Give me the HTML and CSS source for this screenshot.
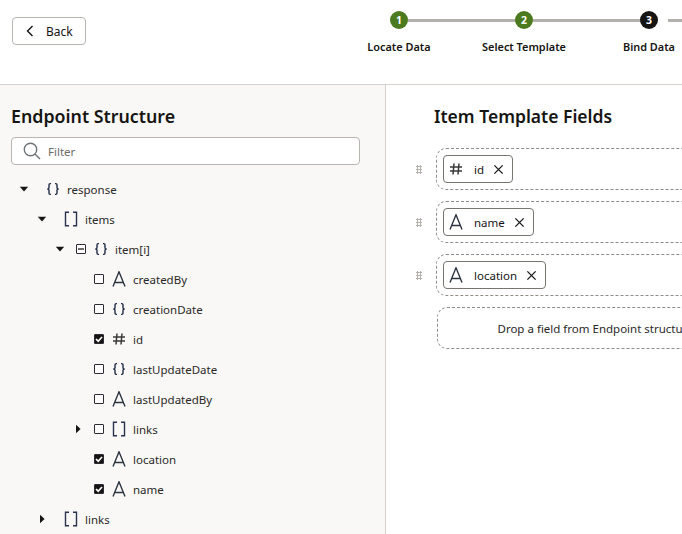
FILE: index.html
```html
<!DOCTYPE html>
<html lang="en">
<head>
    <meta charset="UTF-8">
    <meta name="viewport" content="width=device-width, initial-scale=1.0">
    <title>Bind Data</title>
    <link rel="stylesheet" href="styles.css">
</head>
<body>
    <svg class="defs" width="0" height="0">
        <symbol id="i-obj" viewBox="0 0 14 16"><path d="M5 2.6H4.2C3.2 2.6 3 3.2 3 3.9V6.7C3 7.5 2.4 8 1.3 8 2.4 8 3 8.5 3 9.3V12.1C3 12.8 3.2 13.4 4.2 13.4H5M9 2.6H9.8C10.8 2.6 11 3.2 11 3.9V6.7C11 7.5 11.6 8 12.7 8 11.6 8 11 8.5 11 9.3V12.1C11 12.8 10.8 13.4 9.8 13.4H9" fill="none" stroke="#1f2a44" stroke-width="1.4"/></symbol>
        <symbol id="i-arr" viewBox="0 0 14 16"><path d="M5 1.2H1.5V14.8H5M9 1.2H12.5V14.8H9" fill="none" stroke="#2b3350" stroke-width="1.4"/></symbol>
        <symbol id="i-str" viewBox="0 0 14 16"><path d="M1 15.5 7 .8l6 14.7M2.8 11.5h8.4" fill="none" stroke="#2c3440" stroke-width="1.4"/></symbol>
        <symbol id="i-num" viewBox="0 0 14 16"><path d="M5 2.5 4 13.5M10 2.5l-1 11M1 6h12M1 10h12" fill="none" stroke="#3a3a3a" stroke-width="1.5"/></symbol>
        <symbol id="i-x" viewBox="0 0 12 12"><path d="M1.5 1.5l9 9M10.5 1.5l-9 9" fill="none" stroke="#1c1c1c" stroke-width="1.5"/></symbol>
        <symbol id="i-down" viewBox="0 0 10 10"><path d="M.8 2.8h8.4L5 7.4z" fill="#161513"/></symbol>
        <symbol id="i-right" viewBox="0 0 10 10"><path d="M3 .8v8.4L7.6 5z" fill="#161513"/></symbol>
        <symbol id="i-check" viewBox="0 0 10 10"><path d="M2 5l2.2 2.2L8 3" fill="none" stroke="#fff" stroke-width="1.7"/></symbol>
    </svg>

    <header class="topbar">
        <button class="back-btn" type="button">
            <svg class="back-icon" viewBox="0 0 8 12" width="8" height="12"><path d="M6.5 1 1.5 6l5 5" fill="none" stroke="#161513" stroke-width="1.4"/></svg>
            <span>Back</span>
        </button>
        <ol class="stepper">
            <li class="step done"><span class="step-num">1</span><span class="step-label">Locate Data</span></li>
            <li class="step done"><span class="step-num">2</span><span class="step-label">Select Template</span></li>
            <li class="step current"><span class="step-num">3</span><span class="step-label">Bind Data</span></li>
        </ol>
    </header>

    <main class="content">
        <aside class="structure">
            <h2 class="panel-title">Endpoint Structure</h2>
            <label class="filter">
                <svg class="filter-icon" viewBox="0 0 18 18" width="18" height="18"><circle cx="7.5" cy="7.5" r="6.2" fill="none" stroke="#6f7477" stroke-width="1.4"/><path d="M12 12l5 5" stroke="#6f7477" stroke-width="1.4"/></svg>
                <input class="filter-input" type="text" placeholder="Filter">
            </label>

            <ul class="tree">
                <li class="node lvl-1">
                    <svg class="caret"><use href="#i-down"/></svg>
                    <svg class="type"><use href="#i-obj"/></svg>
                    <span>response</span>
                </li>
                <li class="node lvl-2">
                    <svg class="caret"><use href="#i-down"/></svg>
                    <svg class="type"><use href="#i-arr"/></svg>
                    <span>items</span>
                </li>
                <li class="node lvl-3">
                    <svg class="caret"><use href="#i-down"/></svg>
                    <span class="box partial"></span>
                    <svg class="type"><use href="#i-obj"/></svg>
                    <span>item[i]</span>
                </li>
                <li class="node lvl-4">
                    <span class="caret"></span>
                    <span class="box"></span>
                    <svg class="type"><use href="#i-str"/></svg>
                    <span>createdBy</span>
                </li>
                <li class="node lvl-4">
                    <span class="caret"></span>
                    <span class="box"></span>
                    <svg class="type"><use href="#i-obj"/></svg>
                    <span>creationDate</span>
                </li>
                <li class="node lvl-4">
                    <span class="caret"></span>
                    <span class="box checked"><svg><use href="#i-check"/></svg></span>
                    <svg class="type"><use href="#i-num"/></svg>
                    <span>id</span>
                </li>
                <li class="node lvl-4">
                    <span class="caret"></span>
                    <span class="box"></span>
                    <svg class="type"><use href="#i-obj"/></svg>
                    <span>lastUpdateDate</span>
                </li>
                <li class="node lvl-4">
                    <span class="caret"></span>
                    <span class="box"></span>
                    <svg class="type"><use href="#i-str"/></svg>
                    <span>lastUpdatedBy</span>
                </li>
                <li class="node lvl-4">
                    <svg class="caret"><use href="#i-right"/></svg>
                    <span class="box"></span>
                    <svg class="type"><use href="#i-arr"/></svg>
                    <span>links</span>
                </li>
                <li class="node lvl-4">
                    <span class="caret"></span>
                    <span class="box checked"><svg><use href="#i-check"/></svg></span>
                    <svg class="type"><use href="#i-str"/></svg>
                    <span>location</span>
                </li>
                <li class="node lvl-4">
                    <span class="caret"></span>
                    <span class="box checked"><svg><use href="#i-check"/></svg></span>
                    <svg class="type"><use href="#i-str"/></svg>
                    <span>name</span>
                </li>
                <li class="node lvl-2">
                    <svg class="caret"><use href="#i-right"/></svg>
                    <svg class="type"><use href="#i-arr"/></svg>
                    <span>links</span>
                </li>
            </ul>
        </aside>

        <section class="fields">
            <h2 class="panel-title">Item Template Fields</h2>
            <div class="field-row">
                <span class="handle"></span>
                <div class="slot">
                    <span class="chip"><svg class="chip-type"><use href="#i-num"/></svg><span class="chip-name">id</span><svg class="chip-x"><use href="#i-x"/></svg></span>
                </div>
            </div>
            <div class="field-row">
                <span class="handle"></span>
                <div class="slot">
                    <span class="chip"><svg class="chip-type"><use href="#i-str"/></svg><span class="chip-name">name</span><svg class="chip-x"><use href="#i-x"/></svg></span>
                </div>
            </div>
            <div class="field-row">
                <span class="handle"></span>
                <div class="slot">
                    <span class="chip"><svg class="chip-type"><use href="#i-str"/></svg><span class="chip-name">location</span><svg class="chip-x"><use href="#i-x"/></svg></span>
                </div>
            </div>
            <div class="field-row">
                <span class="handle empty"></span>
                <div class="slot drop">Drop a field from Endpoint structure</div>
            </div>
        </section>
    </main>
</body>
</html>
```
FILE: styles.css
```css
* {
    box-sizing: border-box;
}

html, body {
    height: 100%;
    overflow: hidden;
}

body {
    margin: 0;
    font-family: "Noto Sans", "Open Sans", sans-serif;
    font-size: 11.5px;
    color: #161513;
    background-color: #fff;
}

.defs {
    position: absolute;
}

/* top bar */
.topbar {
    display: flex;
    height: 85px;
    padding: 17px 0 0 12px;
    border-bottom: 1px solid #d6d1cc;
}

.back-btn {
    display: flex;
    flex: none;
    align-items: center;
    width: 74px;
    height: 28px;
    padding: 0 0 0 12.5px;
    font: inherit;
    font-size: 12px;
    color: #161513;
    background-color: #fff;
    border: 1px solid #b8b5b1;
    border-radius: 4px;
}

.back-icon {
    margin-right: 12.5px;
}

.stepper {
    display: flex;
    flex: none;
    margin: -6px 0 0 250.5px;
    padding: 0;
    list-style: none;
}

.step {
    position: relative;
    display: flex;
    flex-direction: column;
    align-items: center;
    width: 125px;
}

.step::after {
    content: "";
    position: absolute;
    top: 8px;
    left: 71px;
    width: 108px;
    height: 3px;
    background-color: #b3b1ae;
}

.current::after {
    left: 81.5px;
}

.step-num {
    position: relative;
    z-index: 1;
    width: 18px;
    height: 18px;
    font-size: 10.5px;
    font-weight: 700;
    line-height: 18px;
    text-align: center;
    color: #fff;
    border-radius: 50%;
}

.done .step-num {
    background-color: #4c7a1f;
}

.current .step-num {
    background-color: #161513;
}

.step-label {
    margin-top: 10px;
    font-size: 10.9px;
    font-weight: 600;
    line-height: 16px;
    white-space: nowrap;
}

/* panels */
.content {
    display: flex;
    height: 449px;
}

.structure {
    flex: none;
    width: 386px;
    padding: 16px 0 0 11px;
    background-color: #f9f8f6;
    border-right: 1px solid #d6d1cc;
}

.panel-title {
    margin: 0;
    font-size: 17.8px;
    font-weight: 600;
    line-height: 30px;
}

.filter {
    display: flex;
    align-items: center;
    width: 349px;
    height: 28px;
    margin-top: 6px;
    padding-left: 11px;
    background-color: #fff;
    border: 1px solid #b8b5b1;
    border-radius: 4px;
}

.filter-input {
    width: 200px;
    margin-left: 7px;
    padding: 0;
    font: inherit;
    border: none;
    outline: none;
    background: none;
}

.filter-input::placeholder {
    color: #6f6c68;
    opacity: 1;
}

/* tree */
.tree {
    margin: 9px 0 0 -11px;
    padding: 0;
    list-style: none;
}

.node {
    display: flex;
    align-items: center;
    height: 30px;
    color: #2a2826;
}

.lvl-1 { padding-left: 19px; }
.lvl-2 { padding-left: 37px; }
.lvl-3 { padding-left: 55px; }
.lvl-4 { padding-left: 73px; }

.caret {
    flex: none;
    width: 10px;
    height: 10px;
    margin-right: 11px;
}

.lvl-1 .caret,
.lvl-2 .caret {
    margin-right: 17px;
}

.box {
    flex: none;
    position: relative;
    width: 10px;
    height: 10px;
    margin-right: 8px;
    border: 1px solid #2d2a33;
    border-radius: 1px;
    background-color: #fff;
}

.box.partial::after {
    content: "";
    position: absolute;
    top: 3px;
    left: 1px;
    width: 6px;
    height: 2px;
    background-color: #6f6c68;
}

.box.checked {
    background-color: #161513;
}

.box.checked svg {
    position: absolute;
    top: -1px;
    left: -1px;
    width: 10px;
    height: 10px;
}

.type {
    flex: none;
    width: 14px;
    height: 16px;
    margin-right: 7px;
}

/* template fields */
.fields {
    flex: none;
    width: 420px;
    padding: 16px 0 0 30px;
}

.fields .panel-title {
    margin: 0 0 17px 18px;
    font-size: 17.5px;
}

.field-row {
    display: flex;
    align-items: center;
    margin-bottom: 11px;
}

.handle {
    flex: none;
    width: 6px;
    height: 9px;
    margin-right: 14px;
    background-image: radial-gradient(circle, #b5b2ae 1px, transparent 1.1px);
    background-size: 3px 3px;
}

.handle.empty {
    background-image: none;
}

.slot {
    display: flex;
    align-items: center;
    flex: none;
    width: 390px;
    height: 42px;
    padding-left: 6px;
    border: 1px dashed #8f8c88;
    border-radius: 10px;
}

.slot.drop {
    margin-left: 1px;
    padding-left: 59.5px;
    color: #2a2826;
}

.chip {
    display: flex;
    align-items: center;
    height: 28px;
    padding: 0 8px 0 5px;
    background-color: #fff;
    border: 1px solid #78746f;
    border-radius: 4px;
}

.chip-type {
    width: 14px;
    height: 16px;
}

.chip-name {
    margin: 0 9px 0 11px;
}

.chip-x {
    width: 11px;
    height: 11px;
}
```
